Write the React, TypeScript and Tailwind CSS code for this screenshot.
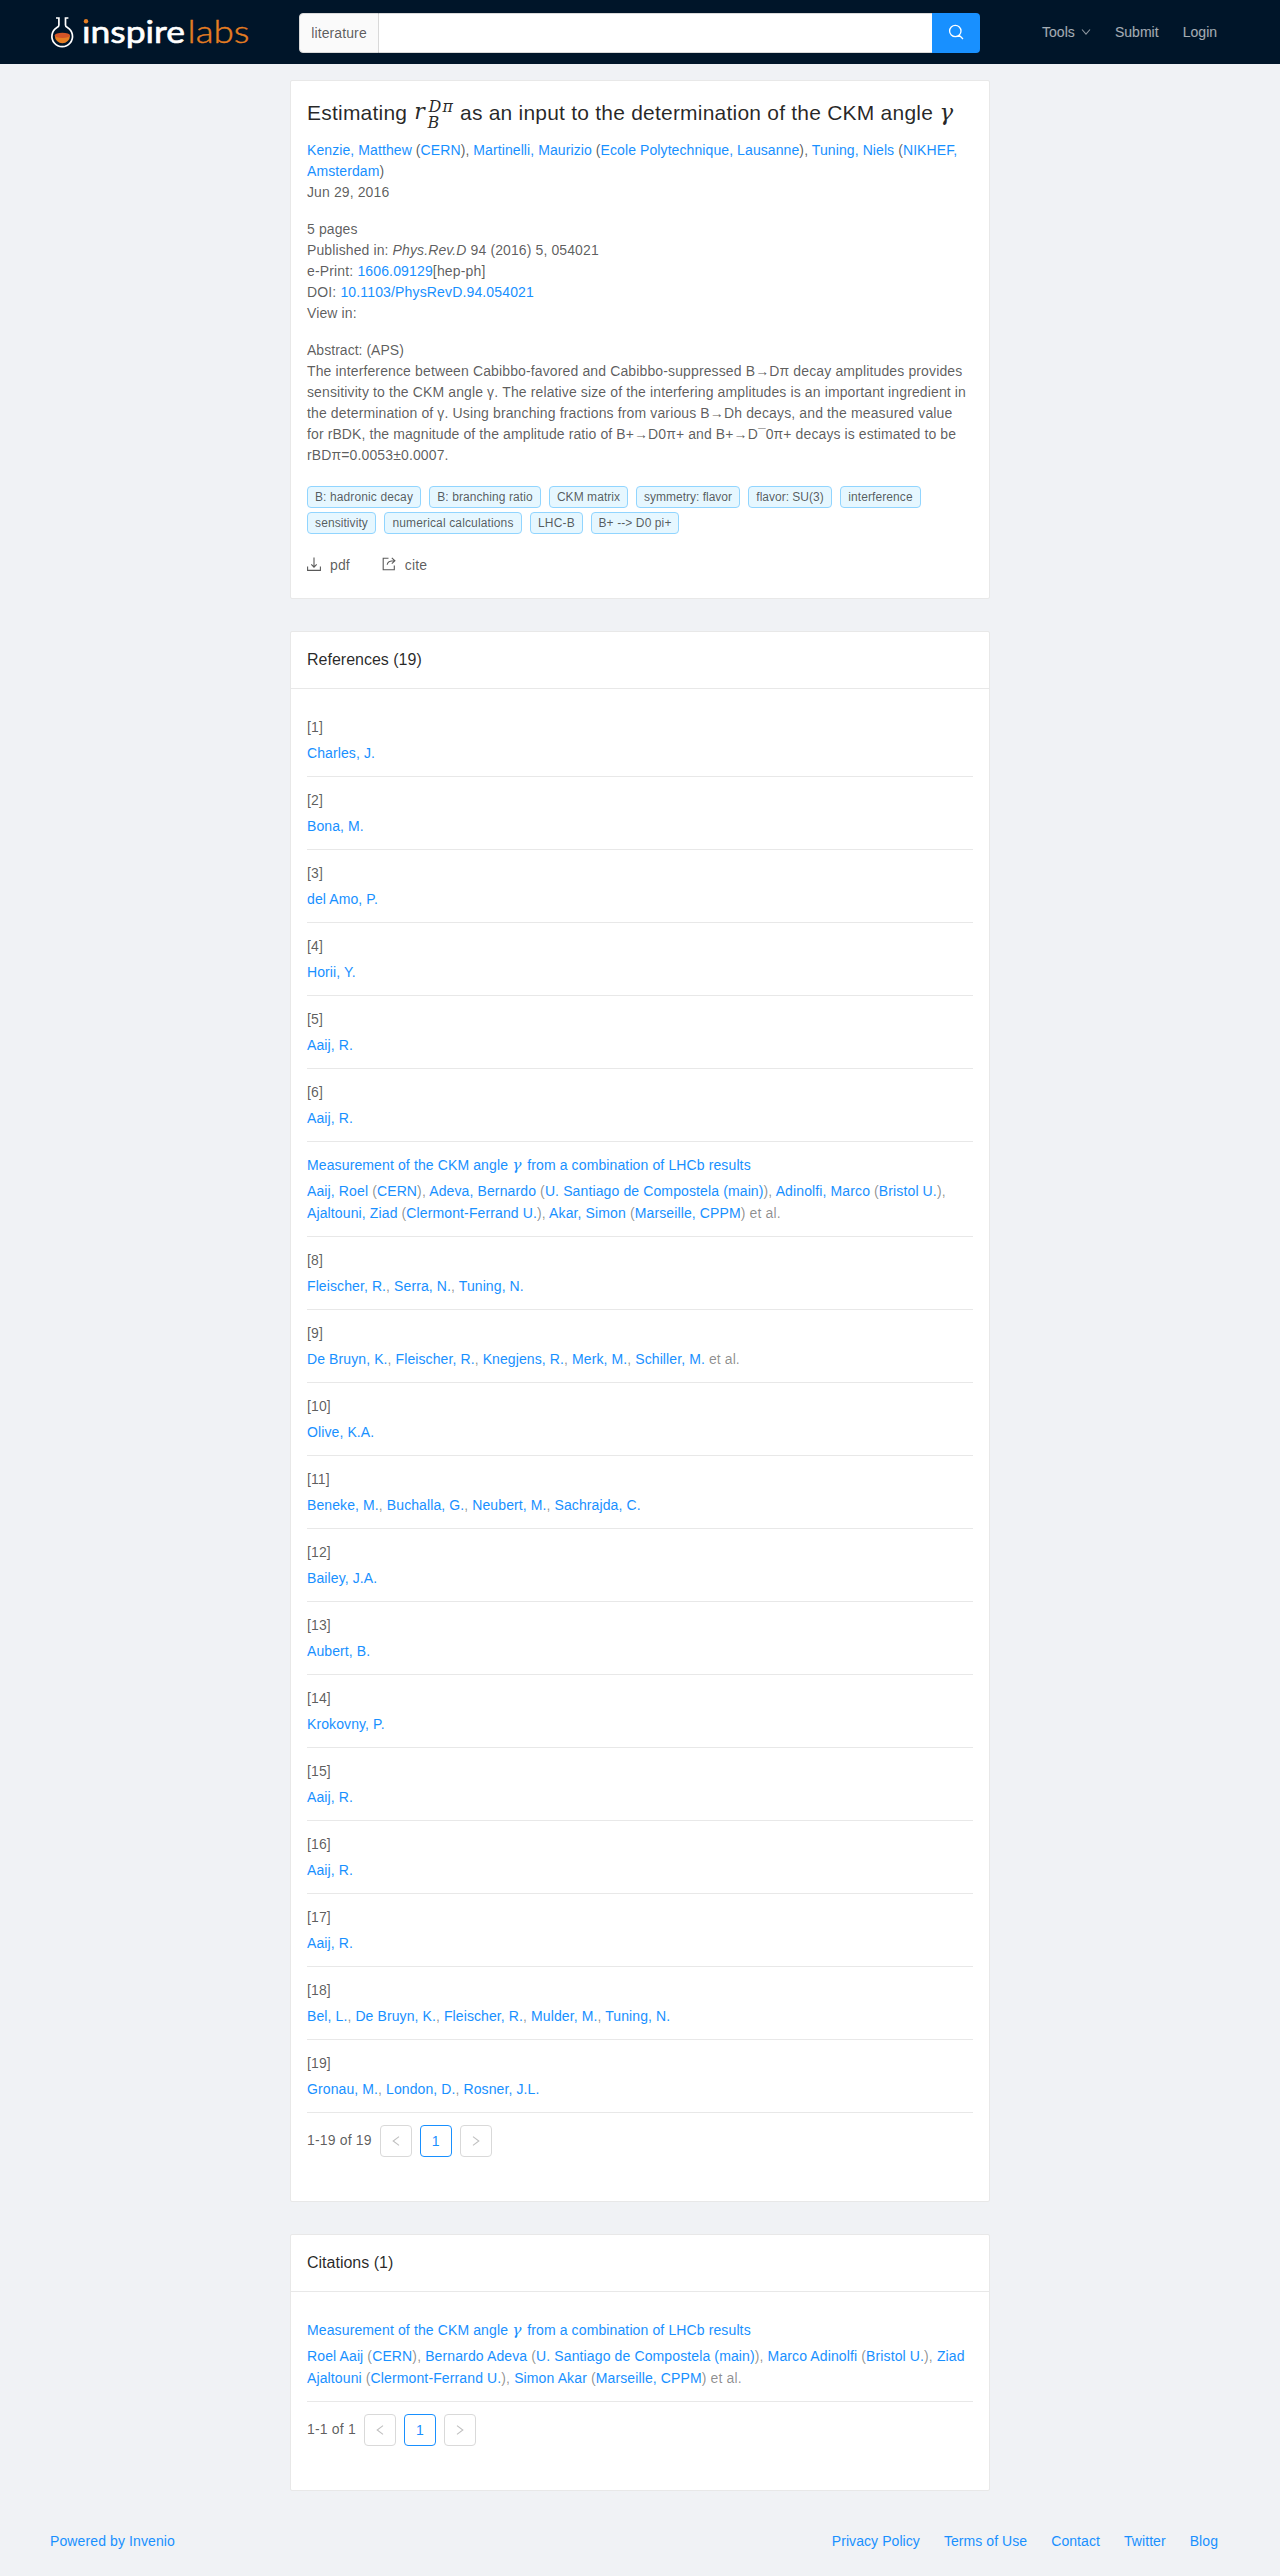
import React, { Fragment } from 'react';

function Link({ children }: { children: React.ReactNode }) {
  return <a className="text-[#1890ff]">{children}</a>;
}

function Logo() {
  return (
    <svg width="202" height="48" viewBox="0 -7 202 48" className="block overflow-visible">
      <path d="M6 3h2.900v7q0 1.700-1.900 2.400A10.300 10.300 0 1 0 17.400 12.400q-1.900-.7-1.900-2.400V3h2.900" fill="none" stroke="#fff" strokeWidth="1.7" />
      <path d="M4.800 20.400a7.600 7.900 0 0 0 15.200 0z" fill="#e67e22" />
      <ellipse cx="12.400" cy="20.400" rx="7.600" ry="2.700" fill="#d35427" />
      <text x="32" y="27.600" fontFamily="Lato" fontWeight="400" fontSize="31" fill="#fff" stroke="#fff" strokeWidth="0.6" letterSpacing="0" textLength="103" lengthAdjust="spacingAndGlyphs">ınspire</text>
      <circle cx="36" cy="6.300" r="2.200" fill="#e67e22" />
      <text x="137.500" y="27.600" fontFamily="Lato" fontWeight="300" fontSize="31" fill="#e67e22" stroke="#e67e22" strokeWidth="0.4" letterSpacing="0" textLength="62" lengthAdjust="spacingAndGlyphs">labs</text>
    </svg>
  );
}

function Icon({ d, w, h, className = '' }: { d: string; w: number; h: number; className?: string }) {
  return (
    <svg width={w} height={h} viewBox={`0 0 ${w} ${h}`} fill="none" stroke="currentColor" strokeWidth="1.1" className={`block shrink-0 ${className}`}>
      <path d={d} />
    </svg>
  );
}

function Gamma() {
  return <span className="inline-block w-[0.72em] text-center font-['DejaVu_Math_TeX_Gyre','Liberation_Serif',serif] text-[1.1em] leading-none tracking-normal">𝛾</span>;
}

function Card({ title, children }: { title?: string; children: React.ReactNode }) {
  return (
    <section className="rounded-[2px] border border-[#e8e8e8] bg-white">
      {title && <h2 className="h-14 box-content border-b border-[#e8e8e8] px-4 text-base leading-[55px] tracking-normal text-black/85">{title}</h2>}
      {children}
    </section>
  );
}

type Author = [string, string?];

function Authors({ list, etAl }: { list: Author[]; etAl?: boolean }) {
  return (
    <>
      {list.map(([name, place], i) => (
        <Fragment key={name}>
          {i > 0 && ', '}
          <Link>{name}</Link>
          {place && <> (<Link>{place}</Link>)</>}
        </Fragment>
      ))}
      {etAl && ' et al.'}
    </>
  );
}

function Item({ title, list, etAl }: { title: React.ReactNode; list: Author[]; etAl?: boolean }) {
  const hasPlaces = list.some(([, place]) => place);
  return (
    <li className={`border-b border-[#e8e8e8] py-3 leading-[22px] ${hasPlaces ? 'tracking-[0.122px]' : 'tracking-[0.1px]'}`}>
      <div className="mb-1 h-[22px]">{title}</div>
      <div className="text-black/45"><Authors list={list} etAl={etAl} /></div>
    </li>
  );
}

function Pagination({ label }: { label: string }) {
  const box = 'flex size-8 items-center justify-center rounded border';
  return (
    <div className="mt-3 flex h-8 gap-2">
      <span className="leading-[30px] tracking-[0.17px]">{label}</span>
      <span className={`${box} border-[#d9d9d9] text-black/25`}><Icon w={8} h={10} d="M7 .6L1.200 5L7 9.400" /></span>
      <span className={`${box} border-[#1890ff] text-[#1890ff]`}>1</span>
      <span className={`${box} border-[#d9d9d9] text-black/25`}><Icon w={8} h={10} d="M1 .6L6.800 5L1 9.400" /></span>
    </div>
  );
}

const paperTitle = <Link>Measurement of the CKM angle <Gamma /> from a combination of LHCb results</Link>;

const references: { n: number; authors: Author[]; etAl?: boolean; titled?: boolean }[] = [
  { n: 1, authors: [['Charles, J.']] },
  { n: 2, authors: [['Bona, M.']] },
  { n: 3, authors: [['del Amo, P.']] },
  { n: 4, authors: [['Horii, Y.']] },
  { n: 5, authors: [['Aaij, R.']] },
  { n: 6, authors: [['Aaij, R.']] },
  {
    n: 7,
    titled: true,
    etAl: true,
    authors: [
      ['Aaij, Roel', 'CERN'],
      ['Adeva, Bernardo', 'U. Santiago de Compostela (main)'],
      ['Adinolfi, Marco', 'Bristol U.'],
      ['Ajaltouni, Ziad', 'Clermont-Ferrand U.'],
      ['Akar, Simon', 'Marseille, CPPM'],
    ],
  },
  { n: 8, authors: [['Fleischer, R.'], ['Serra, N.'], ['Tuning, N.']] },
  { n: 9, etAl: true, authors: [['De Bruyn, K.'], ['Fleischer, R.'], ['Knegjens, R.'], ['Merk, M.'], ['Schiller, M.']] },
  { n: 10, authors: [['Olive, K.A.']] },
  { n: 11, authors: [['Beneke, M.'], ['Buchalla, G.'], ['Neubert, M.'], ['Sachrajda, C.']] },
  { n: 12, authors: [['Bailey, J.A.']] },
  { n: 13, authors: [['Aubert, B.']] },
  { n: 14, authors: [['Krokovny, P.']] },
  { n: 15, authors: [['Aaij, R.']] },
  { n: 16, authors: [['Aaij, R.']] },
  { n: 17, authors: [['Aaij, R.']] },
  { n: 18, authors: [['Bel, L.'], ['De Bruyn, K.'], ['Fleischer, R.'], ['Mulder, M.'], ['Tuning, N.']] },
  { n: 19, authors: [['Gronau, M.'], ['London, D.'], ['Rosner, J.L.']] },
];

const citationAuthors: Author[] = [
  ['Roel Aaij', 'CERN'],
  ['Bernardo Adeva', 'U. Santiago de Compostela (main)'],
  ['Marco Adinolfi', 'Bristol U.'],
  ['Ziad Ajaltouni', 'Clermont-Ferrand U.'],
  ['Simon Akar', 'Marseille, CPPM'],
];

const keywords: [string, string][] = [
  ['B: hadronic decay', 'w-[114px] tracking-[0.12px]'],
  ['B: branching ratio', 'w-28 tracking-[0.08px]'],
  ['CKM matrix', 'w-[79px] tracking-[0.05px]'],
  ['symmetry: flavor', 'w-[104px] tracking-normal'],
  ['flavor: SU(3)', 'w-[84px] tracking-normal'],
  ['interference', 'w-[81px] tracking-[0.08px]'],
  ['sensitivity', 'w-[69px] tracking-[0.08px]'],
  ['numerical calculations', 'w-[138px] tracking-[0.14px]'],
  ['LHC-B', 'w-[53px] tracking-[0.2px]'],
  ['B+ --> D0 pi+', 'w-[88px] tracking-[0.1px]'],
];

export default function App() {
  return (
    <div className="flex h-[2576px] flex-col bg-[#f0f2f5] font-['Liberation_Sans',sans-serif] text-sm leading-[21px] tracking-[0.11px] text-black/65">
      <header className="flex h-16 shrink-0 items-center bg-[#001529]">
        <div className="ml-[50px] w-[249px]"><Logo /></div>
        <div className="mt-[2px] flex h-10 w-[681px]">
          <span className="w-20 rounded-l border border-[#d9d9d9] bg-[#fafafa] text-center leading-[38px]">literature</span>
          <span className="flex-1 border-y border-[#d9d9d9] bg-white" />
          <span className="flex w-12 items-center justify-center rounded-r bg-[#1890ff] pb-0.5 text-white">
            <Icon w={16} h={16} className="stroke-[1.3]" d="M13 7A5.700 5.700 0 1 1 1.600 7A5.700 5.700 0 1 1 13 7M11.300 11.300L15 15" />
          </span>
        </div>
        <nav className="ml-[62px] flex gap-6 tracking-[0.04px] text-white/65">
          <span className="flex items-center gap-1.5">Tools <Icon w={10} h={8} className="opacity-85" d="M1 1.500L5 6.200L9 1.500" /></span>
          <span>Submit</span>
          <span>Login</span>
        </nav>
      </header>

      <main className="mx-auto mt-4 flex w-[700px] flex-col gap-8">
        <Card>
          <div className="h-[517px] px-4 pt-3">
            <h1 className="flex h-[47px] whitespace-pre text-[21px] leading-10 tracking-[0.22px] text-black/85">
              <span className="w-[107px]">Estimating</span>
              <span className="flex w-[46px] font-['DejaVu_Math_TeX_Gyre','Liberation_Serif',serif] tracking-normal">
                <span className="w-[12px] text-[22px]">𝑟</span>
                <span className="flex flex-col pt-1.5 text-base leading-4">
                  <span className="ml-px tracking-[-1px]">𝐷𝜋</span>
                  <span>𝐵</span>
                </span>
              </span>
              <span>as an input to the determination of the CKM angle <Gamma /></span>
            </h1>
            <p className="tracking-[0.09px]">
              <Authors list={[['Kenzie, Matthew', 'CERN'], ['Martinelli, Maurizio', 'Ecole Polytechnique, Lausanne'], ['Tuning, Niels', 'NIKHEF, Amsterdam']]} />
            </p>
            <p>Jun 29, 2016</p>
            <div className="mt-4">
              <p>5 pages</p>
              <p>Published in: <i>Phys.Rev.D</i> 94 (2016) 5, 054021</p>
              <p className="tracking-[0.15px]">e-Print: <Link>1606.09129</Link>[hep-ph]</p>
              <p className="tracking-[0.15px]">DOI: <Link>10.1103/PhysRevD.94.054021</Link></p>
              <p>View in:</p>
            </div>
            <div className="mt-4 whitespace-nowrap">
              <p className="tracking-[0.03px]">Abstract: (APS)</p>
              <p className="tracking-[0.13px]">
                The interference between Cabibbo-favored and Cabibbo-suppressed B→Dπ decay amplitudes provides<br />
                <span className="tracking-[0.12px]">sensitivity to the CKM angle γ. The relative size of the interfering amplitudes is an important ingredient in</span><br />
                the determination of γ. Using branching fractions from various B→Dh decays, and the measured value<br />
                <span className="tracking-[0.1px]">for rBDK, the magnitude of the amplitude ratio of B+→D0π+ and B+→D¯0π+ decays is estimated to be</span><br />
                rBDπ=0.0053±0.0007.
              </p>
            </div>
            <div className="mt-5 flex flex-wrap gap-x-2 gap-y-1">
              {keywords.map(([k, size]) => (
                <span key={k} className={`h-[22px] whitespace-nowrap rounded border border-[#91d5ff] bg-[#e6f7ff] text-center text-xs leading-5 ${size}`}>{k}</span>
              ))}
            </div>
            <div className="mt-[21px] flex gap-8">
              <span className="flex gap-[9px]"><Icon w={14} h={14} className="mt-0.5" d="M.6 9.500V13.400H13.400V9.500M7 .5V10M4.300 7.300L7 10.200L9.700 7.300" />pdf</span>
              <span className="flex gap-[9px]"><Icon w={14} h={14} className="mt-0.5" d="M6.500 1.200H1.200V12.700H12.300V8.500M5.200 7.700C5.400 5 7 3.800 12.500 3.800M9.800 .9L12.900 3.800L9.800 6.700" />cite</span>
            </div>
          </div>
        </Card>

        <Card title="References (19)">
          <div className="px-4 pb-11 pt-[15px]">
            <ul>
              {references.map((r) => (
                <Item key={r.n} title={r.titled ? paperTitle : `[${r.n}]`} list={r.authors} etAl={r.etAl} />
              ))}
            </ul>
            <Pagination label="1-19 of 19" />
          </div>
        </Card>

        <Card title="Citations (1)">
          <div className="px-4 pb-11 pt-[15px]">
            <ul>
              <Item title={paperTitle} list={citationAuthors} etAl />
            </ul>
            <Pagination label="1-1 of 1" />
          </div>
        </Card>
      </main>

      <footer className="mt-10 flex justify-between px-[50px]">
        <Link>Powered by Invenio</Link>
        <div className="mr-3 flex gap-6 tracking-[0.07px]">
          <Link>Privacy Policy</Link>
          <Link>Terms of Use</Link>
          <Link>Contact</Link>
          <Link>Twitter</Link>
          <Link>Blog</Link>
        </div>
      </footer>
    </div>
  );
}
